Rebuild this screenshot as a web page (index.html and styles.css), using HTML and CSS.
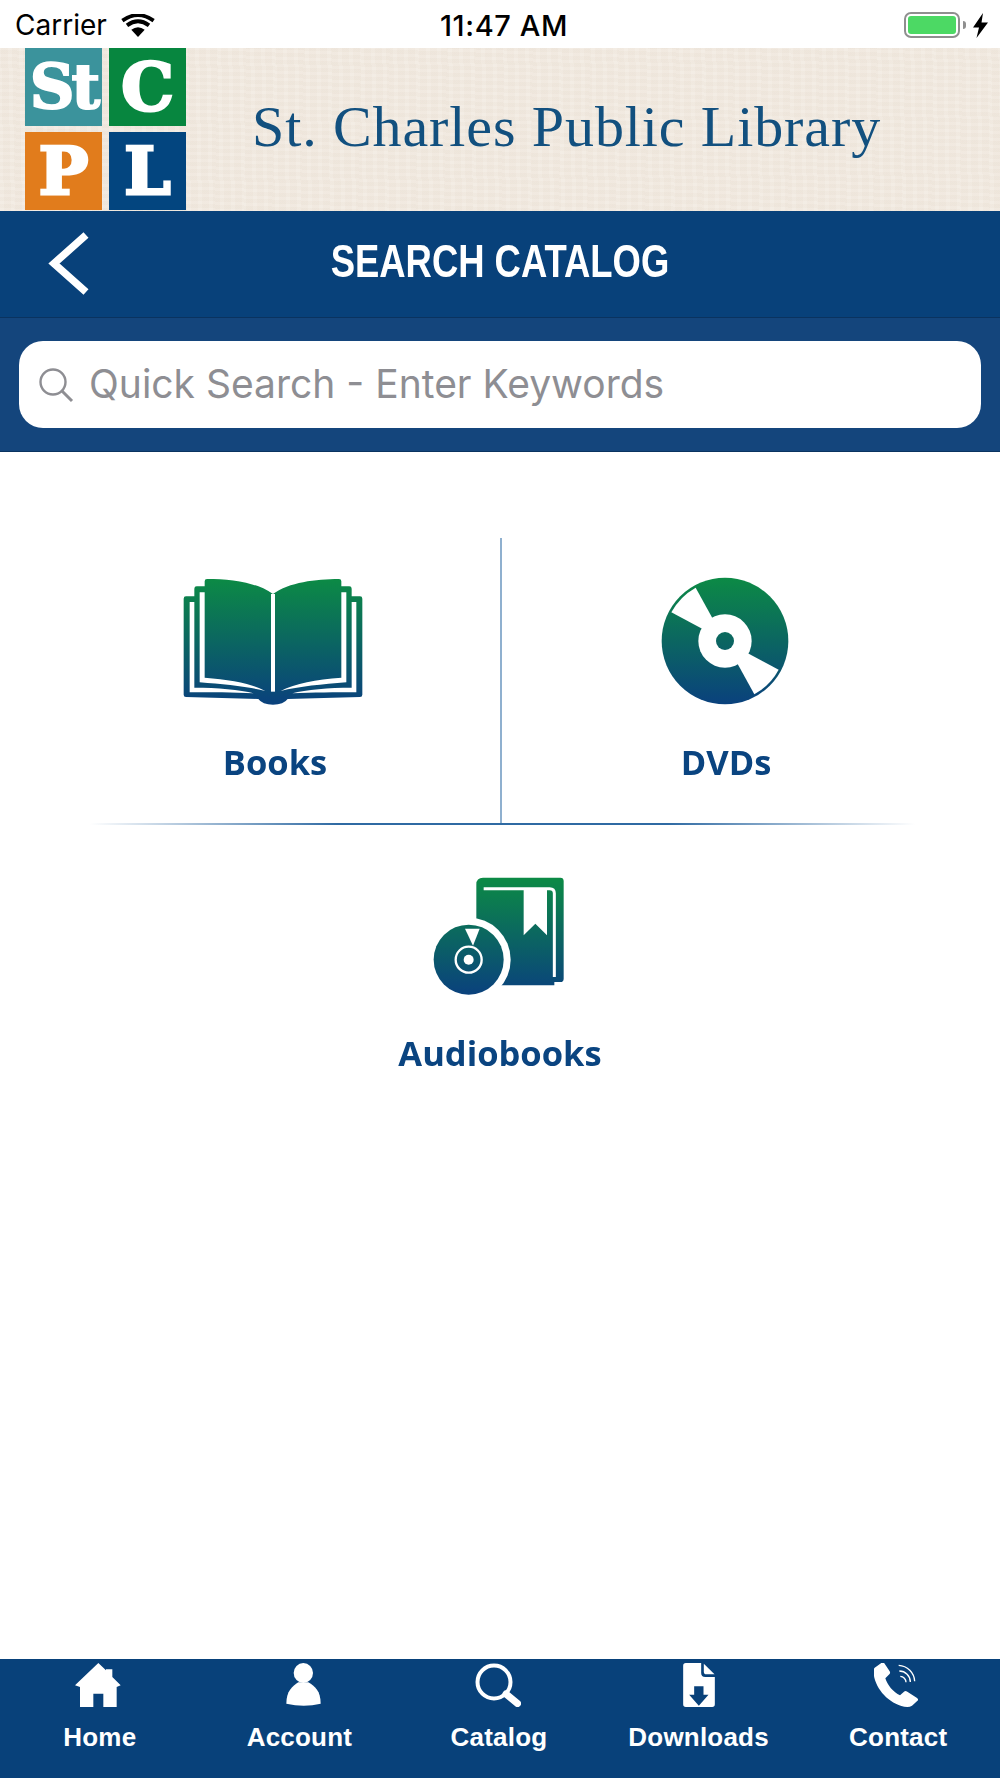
FILE: index.html
```html
<!DOCTYPE html>
<html>
<head>
    <title>Search Catalog</title>
    <link rel="stylesheet" href="styles.css">
</head>
<body>
<div class="page">
    <svg width="0" height="0" class="defs">
        <defs>
            <linearGradient id="bookGrad" gradientUnits="userSpaceOnUse" x1="0" y1="88" x2="0" y2="465">
                <stop offset="0" stop-color="#0c8a45"/>
                <stop offset="1" stop-color="#0a417d"/>
            </linearGradient>
            <linearGradient id="discGrad" gradientUnits="userSpaceOnUse" x1="0" y1="83" x2="0" y2="463">
                <stop offset="0" stop-color="#0c8a45"/>
                <stop offset="1" stop-color="#0a417d"/>
            </linearGradient>
            <linearGradient id="audioGrad" gradientUnits="userSpaceOnUse" x1="0" y1="52" x2="0" y2="404">
                <stop offset="0" stop-color="#0c8a45"/>
                <stop offset="1" stop-color="#0a417d"/>
            </linearGradient>
        </defs>
    </svg>

    <div class="status">
        <div class="status-left">
            <span>Carrier</span>
            <svg class="wifi" width="34" height="23" viewBox="0 0 34 23">
                <path d="M17 23L10.3 15.8Q17 10.6 23.7 15.8Z" fill="#000"/>
                <path d="M6 11.3Q17 3.2 28 11.3" fill="none" stroke="#000" stroke-width="4"/>
                <path d="M1.4 6.6Q17 -4.4 32.6 6.6" fill="none" stroke="#000" stroke-width="3.8"/>
            </svg>
        </div>
        <div class="status-time">11:47 AM</div>
        <div class="status-right">
            <div class="battery"><div class="battery-fill"></div></div>
            <div class="battery-nub"></div>
            <svg class="bolt" width="15" height="25" viewBox="0 0 15 25">
                <path d="M10 0L0 14.5H6L3.5 25L15 9.5H8.5Z" fill="#000"/>
            </svg>
        </div>
    </div>

    <div class="banner">
        <div class="logo">
            <div class="tile teal"><span class="tile-st">St</span></div>
            <div class="tile green"><span>C</span></div>
            <div class="tile orange"><span>P</span></div>
            <div class="tile blue"><span>L</span></div>
        </div>
        <div class="banner-name">St. Charles Public Library</div>
    </div>

    <div class="nav">
        <svg class="back soft" width="44" height="68" viewBox="0 0 44 68">
            <path d="M39 5L7 33.5L39 62" fill="none" stroke="#fff" stroke-width="7.5"/>
        </svg>
        <div class="nav-title">SEARCH CATALOG</div>
    </div>

    <div class="search">
        <div class="search-field">
            <svg width="36" height="36" viewBox="0 0 36 36">
                <circle cx="15" cy="15" r="12.5" fill="none" stroke="#8e8e93" stroke-width="2.4"/>
                <path d="M24 24L34 34" stroke="#8e8e93" stroke-width="3"/>
            </svg>
            <span class="search-text">Quick Search - Enter Keywords</span>
        </div>
    </div>

    <div class="main">
        <div class="grid">
            <div class="cell cell-left">
                <svg class="book soft" width="182" height="127" viewBox="98 85 540 381">
                    <path d="M100 147Q100 140 107 140H132V117Q132 110 139 110H163V95Q163 88 170 88C240 88 320 98 368 133C416 98 496 88 566 88Q573 88 573 95V110H597Q604 110 604 117V140H629Q636 140 636 147V435Q636 442 629 442L412 448Q400 465 368 465Q336 465 324 448L107 442Q100 442 100 435Z" fill="url(#bookGrad)"/>
                    <g id="bookLines" fill="#fff">
                        <path d="M118 157H132V414C200 414 270 420 310 431C250 428 180 428 118 428Z"/>
                        <path d="M148 128H163V384C240 390 300 400 345 424C290 410 220 404 148 398Z"/>
                    </g>
                    <use href="#bookLines" transform="translate(736) scale(-1,1)"/>
                    <path d="M362 133H374V426H362Z" fill="#fff"/>
                </svg>
                <div class="label">Books</div>
            </div>
            <div class="cell">
                <svg class="disc soft" width="128" height="128" viewBox="124 81 384 384">
                    <circle cx="316" cy="273" r="190" fill="url(#discGrad)"/>
                    <path d="M316 273L155 187A186 186 0 0 1 228 113Z" fill="#fff"/>
                    <path d="M316 273L477 359A186 186 0 0 1 404 433Z" fill="#fff"/>
                    <circle cx="316" cy="273" r="80" fill="#fff"/>
                    <circle cx="316" cy="273" r="27" fill="url(#discGrad)"/>
                </svg>
                <div class="label">DVDs</div>
            </div>
        </div>
        <div class="rule"></div>
        <div class="cell audio">
            <svg class="audiobook soft" width="132" height="118" viewBox="158 50 396 354">
                <path d="M288 72Q288 52 308 52H540Q550 52 550 62V355Q550 365 540 365H522V375H288Z" fill="url(#audioGrad)"/>
                <path d="M310 85H508Q522 85 522 99V350" fill="none" stroke="#fff" stroke-width="9"/>
                <path d="M430 88H500V225L465 190L430 225Z" fill="#fff"/>
                <circle cx="265" cy="298" r="126" fill="#fff"/>
                <circle cx="265" cy="298" r="105" fill="url(#audioGrad)"/>
                <path d="M254 205H298L278 256Z" fill="#fff"/>
                <circle cx="265" cy="298" r="39" fill="none" stroke="#fff" stroke-width="7"/>
                <circle cx="265" cy="298" r="15" fill="#fff"/>
            </svg>
            <div class="label">Audiobooks</div>
        </div>
    </div>

    <div class="tabs">
        <div class="tab">
            <svg class="soft tab-home" width="46" height="44" viewBox="225 38 138 132">
                <path d="M295 38L318 60V57H337V80L362 105L350 110V170H310V130H280V170H240V110L225 105Z" fill="#fff"/>
            </svg>
            <span>Home</span>
        </div>
        <div class="tab">
            <svg class="soft tab-account" width="35" height="44" viewBox="862 38 103 132">
                <ellipse cx="913" cy="68" rx="29" ry="30" fill="#fff"/>
                <path d="M862 160C862 122 880 108 898 96H928C948 108 965 122 965 160Q915 172 862 160Z" fill="#fff"/>
            </svg>
            <span>Account</span>
        </div>
        <div class="tab">
            <svg class="soft" width="48" height="44" viewBox="0 0 48 44">
                <circle cx="19" cy="19" r="16.5" fill="none" stroke="#fff" stroke-width="4"/>
                <path d="M31 31L42.5 40.5" stroke="#fff" stroke-width="7" stroke-linecap="round"/>
            </svg>
            <span>Catalog</span>
        </div>
        <div class="tab">
            <svg class="soft" width="32" height="44" viewBox="550 38 95 132">
                <path d="M558 38H604V68Q604 80 616 80H645V162Q645 170 637 170H558Q550 170 550 162V46Q550 38 558 38Z" fill="#fff"/>
                <path d="M612 40L644 72H620Q612 72 612 64Z" fill="#fff"/>
                <path d="M583 108H611V133H626L597 166L568 133H583Z" fill="#08417a"/>
            </svg>
            <span>Downloads</span>
        </div>
        <div class="tab">
            <svg class="soft tab-contact" width="44" height="44" viewBox="1118 38 132 132">
                <path d="M1140 38L1120 52Q1114 58 1119 82C1130 125 1170 165 1218 170Q1226 170 1232 166L1250 150Q1252 146 1246 142L1218 124Q1212 120 1208 124L1196 135C1176 126 1158 104 1152 84L1164 72Q1168 68 1165 63L1150 40Q1146 35 1140 38Z" fill="#fff"/>
                <g fill="none" stroke="#fff" stroke-width="4">
                    <path d="M1192 45A50 50 0 0 1 1240 93"/>
                    <path d="M1194 62A33 33 0 0 1 1227 95"/>
                    <path d="M1197 78A18 18 0 0 1 1214 96"/>
                </g>
            </svg>
            <span>Contact</span>
        </div>
    </div>
</div>
</body>
</html>
```

FILE: styles.css
```css
html, body {
    margin: 0;
    padding: 0;
    background: #fff;
}

.page {
    width: 1000px;
    height: 1778px;
    display: flex;
    flex-direction: column;
    overflow: hidden;
}

.defs {
    position: absolute;
}

svg {
    display: block;
}

/* the original icons are scaled up bitmaps */
.soft {
    filter: blur(0.4px);
}

/* status bar */
.status {
    height: 48px;
    box-sizing: border-box;
    padding-top: 2px;
    display: flex;
    align-items: center;
    font-family: "Inter", "Liberation Sans", sans-serif;
    font-size: 28px;
    color: #000;
}

.status-left {
    flex: 1;
    display: flex;
    align-items: center;
    gap: 14px;
    padding-left: 15px;
}

.status-time {
    font-weight: 500;
    font-size: 29px;
    letter-spacing: 0.6px;
    padding-left: 5px;
}

.status-right {
    flex: 1;
    display: flex;
    align-items: center;
    justify-content: flex-end;
    padding-right: 12px;
}

.battery {
    width: 56px;
    height: 26px;
    box-sizing: border-box;
    border: 2px solid #8f8f8f;
    border-radius: 7px;
    padding: 2px;
}

.battery-fill {
    height: 100%;
    background: #4cd964;
    border-radius: 3px;
}

.battery-nub {
    width: 3px;
    height: 8px;
    margin-left: 3px;
    background: #8f8f8f;
    border-radius: 0 3px 3px 0;
}

.bolt {
    margin-left: 7px;
}

/* banner */
.banner {
    height: 163px;
    display: flex;
    background-color: #f1e9df;
    background-image:
        repeating-linear-gradient(2deg, rgba(255,255,255,0.10) 0 3px, rgba(120,100,80,0.012) 3px 7px),
        repeating-linear-gradient(89deg, rgba(255,255,255,0.08) 0 4px, rgba(120,100,80,0.012) 4px 11px);
}

.logo {
    width: 161px;
    height: 161px;
    margin-left: 25px;
    display: grid;
    grid-template-columns: 77px 77px;
    grid-template-rows: 78px 78px;
    column-gap: 7px;
    row-gap: 6px;
}

.tile {
    display: flex;
    align-items: center;
    justify-content: center;
    color: #fff;
    font-family: "DejaVu Serif", serif;
    font-weight: bold;
    font-size: 66px;
    line-height: 78px;
    -webkit-text-stroke: 3px #fff;
    filter: blur(0.4px);
}

.teal { background: #3b939c; }
.green { background: #07863f; }
.orange { background: #e17c1c; }
.blue { background: #03457f; }

.tile-st {
    font-size: 62px;
    letter-spacing: -3px;
    -webkit-text-stroke: 2px #fff;
}

.banner-name {
    margin-left: 66px;
    margin-top: 48px;
    font-family: "Liberation Serif", serif;
    font-size: 58px;
    letter-spacing: 0.9px;
    line-height: 62px;
    color: #12507f;
    white-space: nowrap;
    filter: blur(0.4px);
}

/* header */
.nav {
    height: 106px;
    background: #08417a;
    border-bottom: 1px solid #0a3360;
    display: flex;
    align-items: center;
    position: relative;
}

.back {
    position: absolute;
    left: 47px;
    top: 19px;
}

.nav-title {
    width: 100%;
    text-align: center;
    font-family: "Liberation Sans", sans-serif;
    font-weight: bold;
    font-size: 47px;
    color: #fff;
    padding-bottom: 7px;
    transform: scaleX(0.775);
}

.search {
    height: 134px;
    box-sizing: border-box;
    padding: 23px 19px 0;
    background: #14457c;
    border-bottom: 1px solid #0a3360;
}

.search-field {
    height: 87px;
    background: #fff;
    border-radius: 24px;
    display: flex;
    align-items: center;
    gap: 15px;
    padding-left: 19px;
    font-family: "Inter", "Liberation Sans", sans-serif;
    font-size: 39px;
    color: #8e8e93;
}

.search-text {
    padding-bottom: 3px;
}

/* main menu */
.main {
    flex: 1;
    padding-top: 86px;
}

.grid {
    margin: 0 50px;
    display: grid;
    grid-template-columns: 452px 448px;
    height: 285px;
}

.cell {
    display: flex;
    flex-direction: column;
    align-items: center;
    padding-top: 40px;
}

.cell-left {
    border-right: 2px solid #8fb0cf;
}

.book {
    margin-right: 5px;
}

.disc {
    margin: -1px 2px 0 0;
}

.rule {
    height: 2px;
    margin: 0 85px 0 90px;
    background: linear-gradient(90deg, rgba(20,80,140,0), #2f6aa3 30%, #2f6aa3 70%, rgba(20,80,140,0));
}

.audio {
    padding-top: 52px;
}

.audiobook {
    margin-right: 2px;
    margin-bottom: 1px;
}

.label {
    margin-top: 34px;
    font-family: "Open Sans", "Liberation Sans", sans-serif;
    font-weight: bold;
    font-size: 34.5px;
    line-height: 46px;
    color: #0a4480;
    filter: blur(0.3px);
}

/* bottom tabs */
.tabs {
    height: 119px;
    box-sizing: border-box;
    padding-right: 2px;
    background: #08417a;
    display: grid;
    grid-template-columns: repeat(5, 1fr);
}

.tab {
    display: flex;
    flex-direction: column;
    align-items: center;
    padding-top: 4px;
    color: #fff;
    font-family: "Liberation Sans", sans-serif;
    font-weight: bold;
    font-size: 26px;
    letter-spacing: 0.2px;
    line-height: 30px;
}

.tab span {
    margin-top: 15px;
}

.tab-home {
    margin-right: 3px;
}

.tab-account {
    margin-left: 8px;
}

.tab-contact {
    margin-right: 4px;
}
```
